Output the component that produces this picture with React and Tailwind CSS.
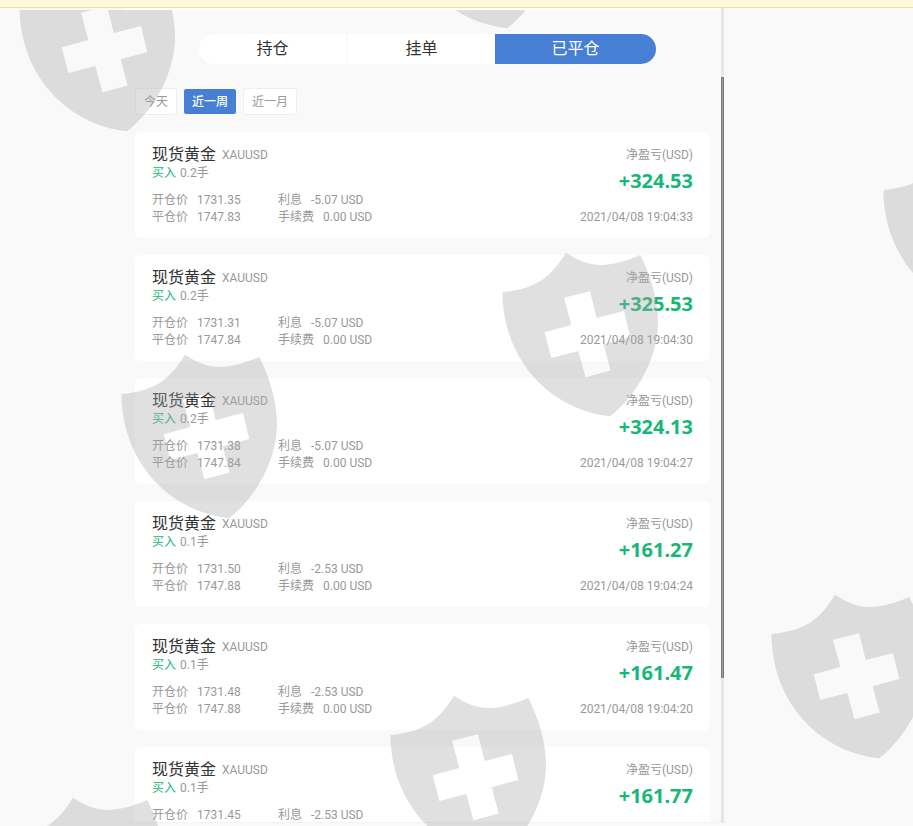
import React, { useState } from "react";

const tabs = ["持仓", "挂单", "已平仓"];
const ranges = ["今天", "近一周", "近一月"];

const orders = [
  { lots: "0.2", open: "1731.35", close: "1747.83", interest: "-5.07", profit: "+324.53", time: "2021/04/08 19:04:33" },
  { lots: "0.2", open: "1731.31", close: "1747.84", interest: "-5.07", profit: "+325.53", time: "2021/04/08 19:04:30" },
  { lots: "0.2", open: "1731.38", close: "1747.84", interest: "-5.07", profit: "+324.13", time: "2021/04/08 19:04:27" },
  { lots: "0.1", open: "1731.50", close: "1747.88", interest: "-2.53", profit: "+161.27", time: "2021/04/08 19:04:24" },
  { lots: "0.1", open: "1731.48", close: "1747.88", interest: "-2.53", profit: "+161.47", time: "2021/04/08 19:04:20" },
  { lots: "0.1", open: "1731.45", close: "1747.88", interest: "-2.53", profit: "+161.77", time: "2021/04/08 19:04:17" },
];

const shields = [
  [19, -43],
  [399, -146],
  [883, 140],
  [502, 242],
  [121, 344],
  [771, 584],
  [390, 685],
  [9, 787],
];

const Watermark = () => (
  <svg
    className="pointer-events-none absolute inset-x-0 top-[2px] bottom-0 h-full w-full"
    aria-hidden="true"
  >
    <defs>
      <path
        id="shield"
        fillRule="evenodd"
        d="M.5 40C32 37 48 27 64 .7C86 15 103 18 138.3 3C148 22 156.500 48 156 72C155 110 132 146 108 164.300C45 157 .5 105 .5 40ZM62 45.700L69.300 73L42.700 80.300L49.300 106L76.300 99L83.500 125.300L108.600 118.600L101.700 92.300L128.300 85L122 59L94.700 66L88 39.300Z"
      />
    </defs>
    {shields.map(([x, y]) => (
      <use key={x} href="#shield" x={x} y={y} fill="#a6a6a6" fillOpacity="0.35" />
    ))}
  </svg>
);

const Field = ({ label, value }) => (
  <div className="flex h-[17px] items-center gap-[9px]">
    <dt>{label}</dt>
    <dd>{value}</dd>
  </div>
);

const OrderCard = ({ order }) => (
  <li className="flex justify-between rounded-md bg-white px-[17px] pt-[13px] pb-3 text-xs leading-[17px] text-[#999]">
    <div>
      <div className="flex h-5 items-center gap-1.5">
        <h2 className="text-base leading-5 text-[#333]">现货黄金</h2>
        <span>XAUUSD</span>
      </div>
      <p className="flex h-[17px] items-center gap-1">
        <span className="text-[#19b776]">买入</span>
        <span>{order.lots}手</span>
      </p>
      <dl className="mt-2.5 grid grid-cols-[126px_auto]">
        <Field label="开仓价" value={order.open} />
        <Field label="利息" value={`${order.interest} USD`} />
        <Field label="平仓价" value={order.close} />
        <Field label="手续费" value="0.00 USD" />
      </dl>
    </div>
    <div className="flex flex-col items-end">
      <p className="flex h-5 items-center">净盈亏(USD)</p>
      <p className="font-['Noto_Sans',sans-serif] text-xl leading-8 font-bold text-[#19b776]">
        {order.profit}
      </p>
      <p className="mt-3 flex h-[17px] items-center">{order.time}</p>
    </div>
  </li>
);

const App = () => {
  const [tab, setTab] = useState("已平仓");
  const [range, setRange] = useState("近一周");

  return (
    <div className="flex h-screen flex-col overflow-hidden bg-white font-[Roboto,'Noto_Sans_CJK_SC',sans-serif]">
      <div className="h-2 shrink-0 border-b border-[#f0e2a0] bg-[#fff9dc]" />
      <main className="relative min-h-0 flex-1 overflow-hidden bg-[#f9f9f9] pb-[3px] pl-[124px]">
        <div className="flex h-full w-full max-w-[600px]">
          <section className="min-w-0 flex-1 overflow-hidden border-t-3 border-b border-t-white border-b-[#f3f3f3] px-[11px] pt-[23px]">
            <div className="flex justify-center pl-2.5">
              <div className="flex gap-0.5 overflow-hidden rounded-full">
                {tabs.map((name) => (
                  <button
                    key={name}
                    onClick={() => setTab(name)}
                    className={`h-[30px] cursor-pointer text-base leading-[30px] ${
                      tab === name
                        ? "-ml-0.5 w-[161px] bg-[#467fd3] text-white"
                        : "w-[147px] bg-white text-[#333]"
                    }`}
                  >
                    {name}
                  </button>
                ))}
              </div>
            </div>
            <div className="mt-6 flex gap-1.5">
              {ranges.map((name) => (
                <button
                  key={name}
                  onClick={() => setRange(name)}
                  className={`h-[27px] cursor-pointer rounded-[3px] border px-2 text-xs ${
                    range === name
                      ? "border-[#f9f9f9] bg-[#467fd3] font-medium text-white"
                      : "border-[#eee] bg-white text-[#999]"
                  }`}
                >
                  {name}
                </button>
              ))}
            </div>
            <ul className="mt-[17px] flex flex-col gap-[17px]">
              {orders.map((order) => (
                <OrderCard key={order.time} order={order} />
              ))}
            </ul>
          </section>
          <div className="w-[3px] shrink-0 bg-[#e6e6e6] pt-[69px]">
            <div className="h-[601px] border-x border-[#7b7b7b] bg-[#999]" />
          </div>
        </div>
        <Watermark />
      </main>
    </div>
  );
};

export default App;
